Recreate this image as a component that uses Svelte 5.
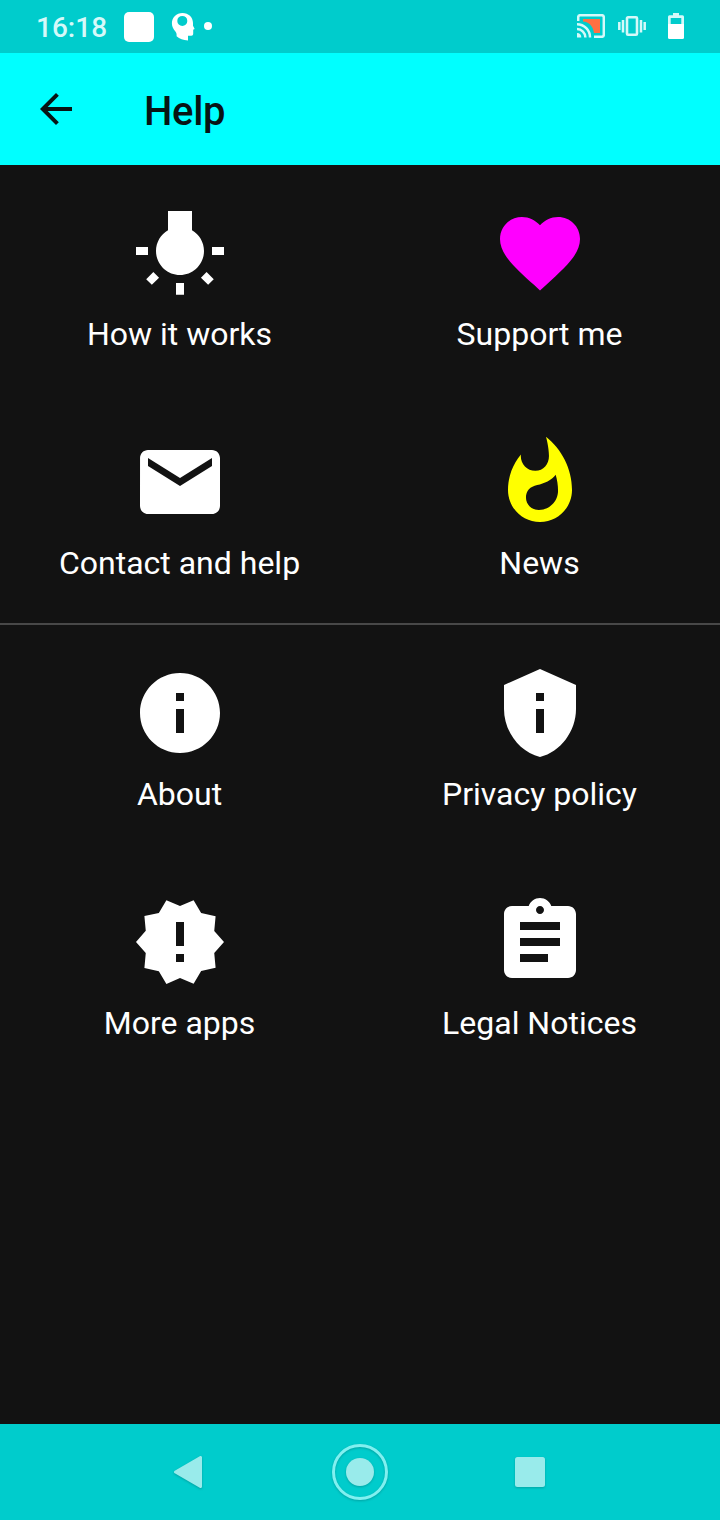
<script>
  const groups = [
    [
      {
        label: 'How it works',
        color: '#ffffff',
        path: 'M3.55 18.54l1.41 1.41 1.8-1.79-1.42-1.41-1.79 1.79zM11 22.45h2V19.5h-2v2.95zM4 10.5H1v2h3v-2zm11-4.19V1.5H9v4.81C7.21 7.35 6 9.28 6 11.5c0 3.31 2.69 6 6 6s6-2.69 6-6c0-2.22-1.21-4.15-3-5.19zm5 4.19v2h3v-2h-3zm-2.76 7.66l1.79 1.8 1.41-1.41-1.8-1.79-1.4 1.4z'
      },
      {
        label: 'Support me',
        color: '#ff00ff',
        path: 'M12 21.35l-1.45-1.32C5.4 15.36 2 12.28 2 8.5 2 5.42 4.42 3 7.5 3c1.74 0 3.41.81 4.5 2.09C13.09 3.81 14.76 3 16.5 3 19.58 3 22 5.42 22 8.5c0 3.78-3.4 6.86-8.55 11.54L12 21.35z'
      },
      {
        label: 'Contact and help',
        color: '#ffffff',
        path: 'M20 4H4c-1.1 0-1.99.9-1.99 2L2 18c0 1.1.9 2 2 2h16c1.1 0 2-.9 2-2V6c0-1.1-.9-2-2-2zm0 4l-8 5-8-5V6l8 5 8-5v2z'
      },
      {
        label: 'News',
        color: '#ffff00',
        path: 'M13.5.67s.74 2.65.74 4.8c0 2.06-1.35 3.73-3.41 3.73-2.07 0-3.63-1.67-3.63-3.73l.03-.36C5.21 7.51 4 10.62 4 14c0 4.42 3.58 8 8 8s8-3.58 8-8C20 8.61 17.41 3.8 13.5.67zM11.71 19c-1.78 0-3.22-1.4-3.22-3.14 0-1.62 1.05-2.76 2.81-3.12 1.77-.36 3.6-1.21 4.62-2.58.39 1.29.59 2.65.59 4.04 0 2.65-2.15 4.8-4.8 4.8z'
      }
    ],
    [
      {
        label: 'About',
        color: '#ffffff',
        path: 'M12 2C6.48 2 2 6.48 2 12s4.48 10 10 10 10-4.48 10-10S17.52 2 12 2zm1 15h-2v-6h2v6zm0-8h-2V7h2v2z'
      },
      {
        label: 'Privacy policy',
        color: '#ffffff',
        path: 'M12 1L3 5v6c0 5.55 3.84 10.74 9 12 5.16-1.26 9-6.45 9-12V5l-9-4zm1 16h-2v-6h2v6zm0-8h-2V7h2v2z'
      },
      {
        label: 'More apps',
        color: '#ffffff',
        path: 'M23 12l-2.44-2.78.34-3.68-3.61-.82-1.89-3.18L12 3 8.6 1.54 6.71 4.72l-3.61.81.34 3.68L1 12l2.44 2.78-.34 3.69 3.61.82 1.89 3.18L12 21l3.4 1.46 1.89-3.18 3.61-.82-.34-3.68L23 12zm-10 5h-2v-2h2v2zm0-4h-2V7h2v6z'
      },
      {
        label: 'Legal Notices',
        color: '#ffffff',
        path: 'M19 3h-4.18C14.4 1.84 13.3 1 12 1c-1.3 0-2.4.84-2.82 2H5c-1.1 0-2 .9-2 2v14c0 1.1.9 2 2 2h14c1.1 0 2-.9 2-2V5c0-1.1-.9-2-2-2zm-7 0c.55 0 1 .45 1 1s-.45 1-1 1-1-.45-1-1 .45-1 1-1zm2 14H7v-2h7v2zm3-4H7v-2h10v2zm0-4H7V7h10v2z'
      }
    ]
  ];
</script>

<div class="screen">
  <div class="status">
    <div class="left">
      <span class="time">16:18</span>
      <span class="square"></span>
      <svg class="head" width="24" height="28" viewBox="0 0 24 28">
        <path fill="#fff" fill-rule="evenodd" d="M11.500 0C5.400 0 .9 4.500.9 10.300c0 3.500 1.500 6 3.500 8.200 1 1.200 1.400 2.500 1.200 4.700 3 2.600 6.500 4 11.400 4.300v-4.700h3.300c1.200 0 1.900-.8 1.900-2V16.500h.6c.7 0 .9-.6.5-1.200l-1.300-2.600V10C22 4.200 17.500 0 11.500 0zM11.300 2.900a5 5 0 1 1 0 10 5 5 0 0 1 0-10z" />
      </svg>
      <span class="dot"></span>
    </div>
    <div class="right">
      <svg width="28" height="24" viewBox="0 0 28 24">
        <path fill="#ff7043" d="M6 5h17v14h-6C16 12 12 8 6 7.500z" />
        <path fill="none" stroke="#d5f9f9" stroke-width="2.500" d="M1.200 7V3.200q0-2 2-2h21.600q2 0 2 2v17.600q0 2-2 2H17M0 10.200A13 13 0 0 1 13 23.500M0 15a8.500 8.500 0 0 1 8.400 8.500" />
        <path fill="#d5f9f9" d="M0 19a4.500 4.500 0 0 1 4.300 4.500H0z" />
      </svg>
      <svg width="28" height="20" viewBox="0 0 28 20">
        <path fill="none" stroke="#d5f9f9" stroke-width="2.500" d="M1.300 6v8M5 4v12.500M23 4v12.500M26.700 6v8" />
        <rect x="9" y="1.300" width="10" height="17.400" rx="1" fill="none" stroke="#d5f9f9" stroke-width="2.600" />
      </svg>
      <svg width="16" height="26" viewBox="0 0 16 26">
        <path fill="#fff" d="M0 11h16v13.500q0 1.500-1.500 1.500h-13Q0 26 0 24.500z" />
        <path fill="#d5f9f9" fill-rule="evenodd" d="M5 0h6v2.200h3.500Q16 2.200 16 3.700V11H0V3.700q0-1.500 1.500-1.500H5zM2.700 5v6h10.600V5z" />
      </svg>
    </div>
  </div>

  <header>
    <svg width="48" height="48" viewBox="0 0 24 24">
      <path fill="#081414" d="M20 11H7.830l5.590-5.590L12 4l-8 8 8 8 1.410-1.410L7.830 13H20v-2z" />
    </svg>
    <h1>Help</h1>
  </header>

  <main>
    {#each groups as group}
      <section>
        {#each group as item}
          <div class="item">
            <svg width="96" height="96" viewBox="0 0 24 24">
              <path fill={item.color} d={item.path} />
            </svg>
            <span>{item.label}</span>
          </div>
        {/each}
      </section>
    {/each}
  </main>

  <nav>
    <svg width="56" height="64" viewBox="0 0 56 64">
      <path fill="#99ebeb" stroke="#99ebeb" stroke-width="3" stroke-linejoin="round" d="M14.500 32L39.500 17.500v29z" />
    </svg>
    <svg width="64" height="64" viewBox="0 0 64 64">
      <circle cx="32" cy="32" r="26.500" fill="none" stroke="#80f0f0" stroke-width="3" />
      <circle cx="32" cy="32" r="14" fill="#99ebeb" />
    </svg>
    <svg width="56" height="64" viewBox="0 0 56 64">
      <rect x="12" y="17" width="30" height="30" rx="2.500" fill="#99ebeb" />
    </svg>
  </nav>
</div>

<style>
  :global(body) {
    margin: 0;
    background: #121212;
  }
  .screen {
    width: 720px;
    height: 1520px;
    display: flex;
    flex-direction: column;
    background: #121212;
    color: #fff;
    font-family: Roboto, sans-serif;
    overflow: hidden;
  }
  svg {
    display: block;
    flex: none;
  }
  .status {
    height: 53px;
    box-sizing: border-box;
    padding: 0 36px;
    display: flex;
    align-items: center;
    justify-content: space-between;
    background: #00cccc;
  }
  .left,
  .right {
    display: flex;
    align-items: center;
  }
  .time {
    width: 88px;
    font-size: 28px;
    font-weight: 500;
    line-height: 32px;
    color: #d5f9f9;
    padding-top: 3px;
    box-sizing: border-box;
  }
  .square {
    width: 30px;
    height: 30px;
    border-radius: 5px;
    background: #fff;
  }
  .head {
    margin-left: 17px;
  }
  .dot {
    width: 8px;
    height: 8px;
    margin: 0 0 2px 9px;
    border-radius: 50%;
    background: #fff;
  }
  .right {
    gap: 13px;
    padding-bottom: 1px;
  }
  .right svg:last-child {
    margin-left: 9px;
  }
  header {
    height: 112px;
    box-sizing: border-box;
    padding-left: 32px;
    display: flex;
    align-items: center;
    gap: 64px;
    background: #00ffff;
  }
  h1 {
    margin: 0;
    padding-top: 6px;
    font-size: 40px;
    font-weight: 500;
    line-height: 48px;
    letter-spacing: -0.3px;
    color: #081414;
  }
  main {
    flex: 1;
  }
  section {
    display: grid;
    grid-template-columns: 1fr 1fr;
  }
  section + section {
    border-top: 2px solid #484848;
  }
  .item {
    height: 229px;
    box-sizing: border-box;
    padding-top: 40px;
    display: flex;
    flex-direction: column;
    align-items: center;
    gap: 14px;
  }
  .item span {
    padding-right: 1px;
    font-size: 32px;
    line-height: 38px;
  }
  nav {
    height: 96px;
    display: flex;
    align-items: center;
    justify-content: center;
    gap: 111px;
    background: #00cccc;
  }
  nav svg {
    filter: drop-shadow(0 1px 1px rgba(0, 70, 70, 0.3));
  }
</style>
